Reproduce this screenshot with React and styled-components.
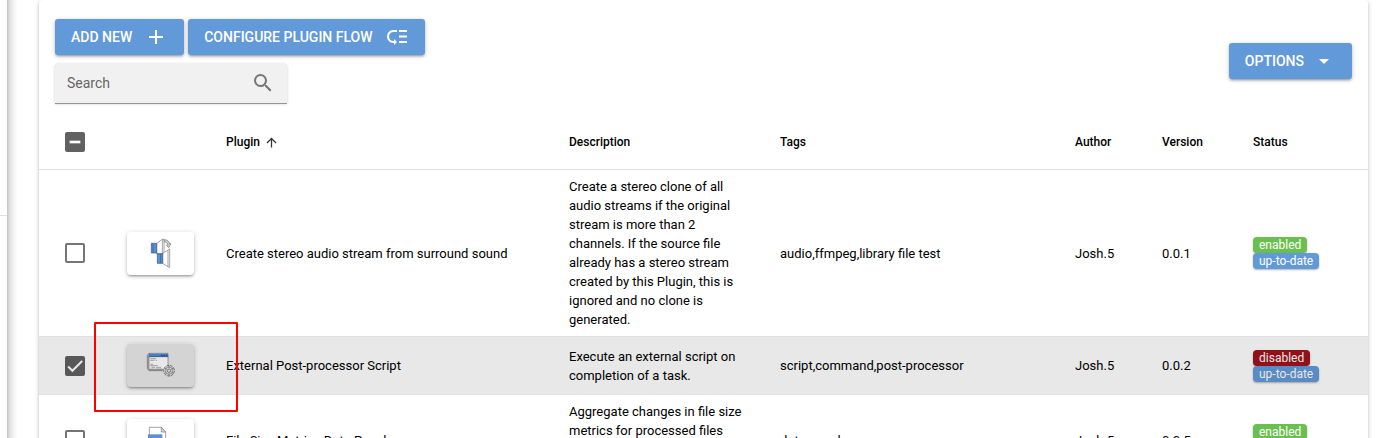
import React, { useEffect, useRef, useState } from "react";
import styled, { createGlobalStyle, ThemeProvider } from "styled-components";
import { MdAdd, MdArrowDropDown, MdArrowUpward, MdLowPriority, MdSearch } from "react-icons/md";

const theme = {
  primary: "#6299d9",
  positive: "#6abf4f",
  negative: "#a0131e",
  line: "#e0e0e0",
  box: "#757575",
  boxFill: "#616161",
  elevation:
    "0 1px 5px rgba(0,0,0,.2), 0 2px 2px rgba(0,0,0,.14), 0 3px 1px -2px rgba(0,0,0,.12)",
};

const GlobalStyle = createGlobalStyle`
  *, *::before, *::after { box-sizing: border-box; }
  body {
    margin: 0;
    background: #fff;
    color: #000;
    font: 13px/19px Roboto, "Liberation Sans", sans-serif;
  }
`;

const Page = styled.div`
  display: flex;
  height: 100vh;
  overflow: hidden;
`;

const Drawer = styled.aside`
  flex: 0 0 7px;
  padding-top: 215px;
`;

const DrawerDivider = styled.hr`
  margin: 0;
  border: 0;
  border-top: 1px solid ${(p) => p.theme.line};
`;

const Main = styled.main`
  flex: 1;
  min-width: 0;
  padding: 0 27px 0 32px;
  background: linear-gradient(to right, #c4c4c4, #e2e2e2 3px, #f6f6f6 7px, #fff 11px);
`;

const Card = styled.section`
  background: #fff;
  border-radius: 4px;
  box-shadow: ${(p) => p.theme.elevation};
`;

const Toolbar = styled.header`
  display: flex;
  align-items: center;
  justify-content: space-between;
  padding: 19px 16px 12px;
`;

const Tools = styled.div`
  display: flex;
  flex-direction: column;
  align-items: flex-start;
  gap: 8px;
`;

const ButtonGroup = styled.div`
  display: flex;
  gap: 4px;
`;

const Button = styled.button`
  display: inline-flex;
  align-items: center;
  gap: ${(p) => p.$gap || 12}px;
  height: 36px;
  padding: 0 16px;
  border: 0;
  border-radius: 3px;
  background: ${(p) => p.theme.primary};
  box-shadow: ${(p) => p.theme.elevation};
  color: #fff;
  font: 500 14px/24px Roboto, "Liberation Sans", sans-serif;
  text-transform: uppercase;
  cursor: pointer;
`;

const SearchField = styled.label`
  display: flex;
  align-items: center;
  width: 232px;
  height: 40px;
  padding: 0 12px;
  border-radius: 4px 4px 0 0;
  background: #f1f1f1;
  box-shadow: 0 1px 0 #949494, 0 1px 3px rgba(0, 0, 0, 0.2);
  color: ${(p) => p.theme.box};
`;

const SearchInput = styled.input`
  flex: 1;
  min-width: 0;
  padding: 0;
  border: 0;
  outline: 0;
  background: none;
  font: 14px/24px Roboto, "Liberation Sans", sans-serif;
  &::placeholder { color: #666; opacity: 1; }
`;

const Table = styled.table`
  width: 100%;
  border-collapse: separate;
  border-spacing: 0;
  table-layout: fixed;
`;

const Col = styled.col`
  width: ${(p) => (p.$width ? `${p.$width}px` : "auto")};
`;

const HeadCell = styled.th`
  height: 55px;
  padding: 0 16px;
  border-bottom: 1px solid ${(p) => p.theme.line};
  font-size: 12px;
  font-weight: 500;
  text-align: left;
`;

const SortLabel = styled.span`
  display: inline-flex;
  align-items: center;
  gap: 4px;
  svg { color: #333; }
`;

const Cell = styled.td`
  position: relative;
  padding: 7px 16px;
  border-bottom: 1px solid ${(p) => p.theme.line};
`;

const Row = styled.tr`
  ${Cell}::after {
    content: "";
    position: absolute;
    inset: 0;
    background: ${(p) => (p.$selected ? "rgba(0,0,0,.09)" : "none")};
    pointer-events: none;
  }
`;

const CheckWrap = styled.span`
  position: relative;
  display: block;
  width: 20px;
  height: 20px;
  margin-left: 10px;
  svg {
    position: absolute;
    inset: 2px;
    pointer-events: none;
  }
`;

const CheckInput = styled.input`
  appearance: none;
  display: block;
  width: 20px;
  height: 20px;
  margin: 0;
  border: 2px solid ${(p) => p.theme.box};
  border-radius: 2px;
  &:checked, &:indeterminate {
    border-color: ${(p) => p.theme.boxFill};
    background: ${(p) => p.theme.boxFill};
  }
`;

const Thumb = styled.div`
  width: 67px;
  height: 43px;
  border-radius: 4px;
  background: ${(p) => (p.$active ? "#e9e9e9" : "#fff")};
  box-shadow: ${(p) => p.theme.elevation};
  svg { display: block; }
`;

const Highlight = styled.div`
  position: absolute;
  z-index: 2;
  inset: -15px -28px -18px -17px;
  border: 2px solid #f00;
  border-radius: 1px;
  pointer-events: none;
`;

const Badges = styled.div`
  display: flex;
  flex-direction: column;
  align-items: flex-start;
`;

const Badge = styled.span`
  padding: 2px 6px;
  border-radius: 4px;
  background: ${(p) => p.theme[p.$tone]};
  box-shadow: 0 1px 2px rgba(0, 0, 0, 0.3);
  color: #fff;
  font-size: 12px;
  line-height: 12px;
`;

function Checkbox({ label, checked, indeterminate, onChange }) {
  const ref = useRef(null);
  useEffect(() => {
    ref.current.indeterminate = Boolean(indeterminate);
  }, [indeterminate]);
  return (
    <CheckWrap>
      <CheckInput ref={ref} type="checkbox" aria-label={label} checked={checked} onChange={onChange} />
      {indeterminate && (
        <svg width="16" height="16" viewBox="0 0 24 24" aria-hidden="true">
          <path d="M4 14H20V10H4Z" fill="#fff" />
        </svg>
      )}
      {checked && !indeterminate && (
        <svg width="16" height="16" viewBox="0 0 24 24" aria-hidden="true">
          <path d="M1.73 12.91 8.1 19.28 22.79 4.59" fill="none" stroke="#fff" strokeWidth="3.12" />
        </svg>
      )}
    </CheckWrap>
  );
}

const SpeakerArt = () => (
  <svg width="67" height="43" viewBox="6 12 201 129" aria-hidden="true">
    <g stroke="#777" strokeWidth="2">
      <path d="M95 46 112 34H117V70L112 78H95Z" fill="#fff" />
      <path d="M112 34V78" fill="none" />
      <path d="M79 46H95V75H79Z" fill="#5b91d6" stroke="#34567f" />
      <path d="M84 47V74" stroke="#34567f" />
      <path d="M118 35C127 35 133 40 134 48L138 47 131 59 124 51 128 50C127 44 123 42 118 42Z" fill="#ccc" />
      <path d="M113 76 134 63V119L113 106Z" fill="#fff" />
      <path d="M129 67V116" fill="none" />
      <path d="M97 77H113V106H97Z" fill="#5b91d6" stroke="#34567f" />
      <path d="M107 78V105" stroke="#34567f" />
    </g>
  </svg>
);

const ScriptArt = () => (
  <svg width="67" height="43" viewBox="6 6 201 129" aria-hidden="true">
    <path d="M71 35 67 40V80L72 86H112V80H74V35Z" fill="#bbb" stroke="#777" strokeWidth="2" />
    <path d="M72 34H129V83H72Z" fill="#fff" stroke="#777" strokeWidth="2" />
    <path d="M72 35H129V45H72Z" fill="#4f8ad6" />
    <path d="M71 44H130" stroke="#345b8c" strokeWidth="2" />
    <path d="M108 40H113M116 40H120M123 40H127" stroke="#24466f" strokeWidth="3" />
    <path d="M76 50H93M76 55H88M92 55H96M76 67H84M76 71H98M79 76H90M93 76H108M76 81H88M91 81H112" stroke="#888" strokeWidth="2" />
    <circle cx="132" cy="86" r="16" fill="#e4e4e4" stroke="#777" strokeWidth="3" strokeDasharray="8 3" />
    <circle cx="132" cy="86" r="11" fill="none" stroke="#888" strokeWidth="2" />
    <circle cx="132" cy="86" r="5" fill="#eee" stroke="#555" strokeWidth="2" />
    <path d="M132 71V78M132 94V102M119 78 125 82M139 90 146 95M119 95 125 90M139 82 146 78" stroke="#666" strokeWidth="2" />
  </svg>
);

const FileArt = () => (
  <svg width="67" height="43" viewBox="6 21 201 129" aria-hidden="true">
    <path d="M73 46H109L122 60V124H73Z" fill="#fff" stroke="#777" strokeWidth="2" />
    <path d="M109 46V60H122Z" fill="#ddd" stroke="#777" strokeWidth="2" />
    <path d="M69 67H112V98H69Z" fill="#5b91d6" />
  </svg>
);

const columns = [72, 99, null, 211, 295, 87, 91, 131];

const plugins = [
  {
    id: "stereo",
    art: SpeakerArt,
    name: "Create stereo audio stream from surround sound",
    description:
      "Create a stereo clone of all audio streams if the original stream is more than 2 channels. If the source file already has a stereo stream created by this Plugin, this is ignored and no clone is generated.",
    tags: "audio,ffmpeg,library file test",
    author: "Josh.5",
    version: "0.0.1",
    enabled: true,
  },
  {
    id: "script",
    art: ScriptArt,
    name: "External Post-processor Script",
    description: "Execute an external script on completion of a task.",
    tags: "script,command,post-processor",
    author: "Josh.5",
    version: "0.0.2",
    enabled: false,
    highlighted: true,
  },
  {
    id: "metrics",
    art: FileArt,
    name: "File Size Metrics Data Panel",
    description:
      "Aggregate changes in file size metrics for processed files automatically and display the results in a data panel.",
    tags: "data panel",
    author: "Josh.5",
    version: "0.0.5",
    enabled: true,
  },
];

export default function App() {
  const [selected, setSelected] = useState(["script"]);
  const all = selected.length === plugins.length;
  const toggle = (id) =>
    setSelected((s) => (s.includes(id) ? s.filter((x) => x !== id) : [...s, id]));

  return (
    <ThemeProvider theme={theme}>
      <GlobalStyle />
      <Page>
        <Drawer>
          <DrawerDivider />
        </Drawer>
        <Main>
          <Card>
            <Toolbar>
              <Tools>
                <ButtonGroup>
                  <Button type="button">Add new <MdAdd size={24} /></Button>
                  <Button type="button">Configure plugin flow <MdLowPriority size={24} /></Button>
                </ButtonGroup>
                <SearchField>
                  <SearchInput type="text" placeholder="Search" aria-label="Search" />
                  <MdSearch size={24} />
                </SearchField>
              </Tools>
              <Button type="button" $gap={8}>Options <MdArrowDropDown size={24} /></Button>
            </Toolbar>
            <Table>
              <colgroup>
                {columns.map((width, i) => <Col key={i} $width={width} />)}
              </colgroup>
              <thead>
                <tr>
                  <HeadCell>
                    <Checkbox
                      label="Select all plugins"
                      checked={all}
                      indeterminate={selected.length > 0 && !all}
                      onChange={() => setSelected(all ? [] : plugins.map((p) => p.id))}
                    />
                  </HeadCell>
                  <HeadCell />
                  <HeadCell><SortLabel>Plugin <MdArrowUpward size={15} /></SortLabel></HeadCell>
                  <HeadCell>Description</HeadCell>
                  <HeadCell>Tags</HeadCell>
                  <HeadCell>Author</HeadCell>
                  <HeadCell>Version</HeadCell>
                  <HeadCell>Status</HeadCell>
                </tr>
              </thead>
              <tbody>
                {plugins.map((p) => {
                  const Art = p.art;
                  const on = selected.includes(p.id);
                  return (
                    <Row key={p.id} $selected={on}>
                      <Cell><Checkbox label={`Select ${p.name}`} checked={on} onChange={() => toggle(p.id)} /></Cell>
                      <Cell>
                        <Thumb $active={p.highlighted}><Art /></Thumb>
                        {p.highlighted && <Highlight />}
                      </Cell>
                      <Cell>{p.name}</Cell>
                      <Cell>{p.description}</Cell>
                      <Cell>{p.tags}</Cell>
                      <Cell>{p.author}</Cell>
                      <Cell>{p.version}</Cell>
                      <Cell>
                        <Badges>
                          <Badge $tone={p.enabled ? "positive" : "negative"}>{p.enabled ? "enabled" : "disabled"}</Badge>
                          <Badge $tone="primary">up-to-date</Badge>
                        </Badges>
                      </Cell>
                    </Row>
                  );
                })}
              </tbody>
            </Table>
          </Card>
        </Main>
      </Page>
    </ThemeProvider>
  );
}
